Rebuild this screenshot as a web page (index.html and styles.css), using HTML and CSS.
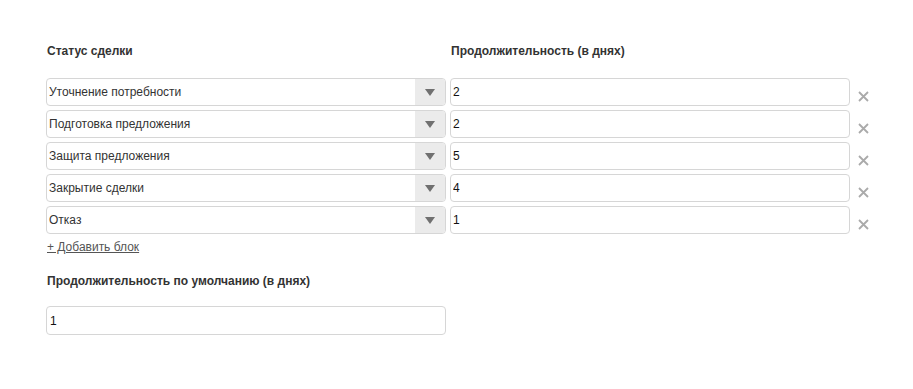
FILE: index.html
```html
<!DOCTYPE html>
<html>
<head>
  <meta charset="UTF-8">
  <title>Статусы сделки</title>
  <link rel="stylesheet" href="styles.css">
</head>
<body>
  <div class="container">
    <div class="stages">
      <div class="heading">Статус сделки</div>
      <div class="heading">Продолжительность (в днях)</div>
      <div></div>

      <div class="select"><span class="select-value">Уточнение потребности</span><span class="select-arrow"></span></div>
      <input class="field" type="text" value="2">
      <span class="remove"><svg width="11" height="11" viewBox="0 0 11 11"><path d="M1 1L10 10M10 1L1 10" stroke="#aaa" stroke-width="1.8"/></svg></span>

      <div class="select"><span class="select-value">Подготовка предложения</span><span class="select-arrow"></span></div>
      <input class="field" type="text" value="2">
      <span class="remove"><svg width="11" height="11" viewBox="0 0 11 11"><path d="M1 1L10 10M10 1L1 10" stroke="#aaa" stroke-width="1.8"/></svg></span>

      <div class="select"><span class="select-value">Защита предложения</span><span class="select-arrow"></span></div>
      <input class="field" type="text" value="5">
      <span class="remove"><svg width="11" height="11" viewBox="0 0 11 11"><path d="M1 1L10 10M10 1L1 10" stroke="#aaa" stroke-width="1.8"/></svg></span>

      <div class="select"><span class="select-value">Закрытие сделки</span><span class="select-arrow"></span></div>
      <input class="field" type="text" value="4">
      <span class="remove"><svg width="11" height="11" viewBox="0 0 11 11"><path d="M1 1L10 10M10 1L1 10" stroke="#aaa" stroke-width="1.8"/></svg></span>

      <div class="select"><span class="select-value">Отказ</span><span class="select-arrow"></span></div>
      <input class="field" type="text" value="1">
      <span class="remove"><svg width="11" height="11" viewBox="0 0 11 11"><path d="M1 1L10 10M10 1L1 10" stroke="#aaa" stroke-width="1.8"/></svg></span>
    </div>

    <a class="add-link" href="#">+ Добавить блок</a>

    <div class="heading default-heading">Продолжительность по умолчанию (в днях)</div>
    <input class="field default-field" type="text" value="1">
  </div>
</body>
</html>
```

FILE: styles.css
```css
body {
  margin: 0;
  background-color: #fff;
  font-family: "Liberation Sans", Arial, sans-serif;
  font-size: 12px;
  color: #333;
}
.container {
  padding: 44px 0 0 46px;
}
.stages {
  display: grid;
  grid-template-columns: 400px 400px 20px;
  column-gap: 4px;
  row-gap: 4px;
}
.heading {
  font-weight: bold;
  line-height: 14px;
  padding-left: 1px;
  margin-bottom: 16px;
  color: #333;
}
.select {
  display: flex;
  height: 28px;
  box-sizing: border-box;
  border: 1px solid #d6d6d6;
  border-radius: 4px;
  background-color: #fff;
  overflow: hidden;
}
.select-value {
  flex: 1;
  line-height: 26px;
  padding-left: 2px;
  color: #333;
}
.select-arrow {
  width: 30px;
  background-color: #ebebeb;
  position: relative;
}
.select-arrow::after {
  content: "";
  position: absolute;
  left: 10px;
  top: 10px;
  border-left: 5px solid transparent;
  border-right: 5px solid transparent;
  border-top: 7px solid #707070;
}
.field {
  height: 28px;
  width: 100%;
  box-sizing: border-box;
  border: 1px solid #d6d6d6;
  border-radius: 4px;
  padding: 0 2px;
  margin: 0;
  font-family: "Liberation Sans", Arial, sans-serif;
  font-size: 12px;
  color: #111;
  outline: none;
}
.remove {
  padding: 13px 0 0 4px;
  line-height: 0;
}
.add-link {
  display: inline-block;
  margin-top: 6px;
  padding-left: 1px;
  line-height: 14px;
  color: #555;
  text-decoration: underline;
}
.default-heading {
  margin-top: 20px;
  margin-bottom: 18px;
}
.default-field {
  display: block;
  width: 400px;
  height: 29px;
  padding-left: 3px;
}
```
